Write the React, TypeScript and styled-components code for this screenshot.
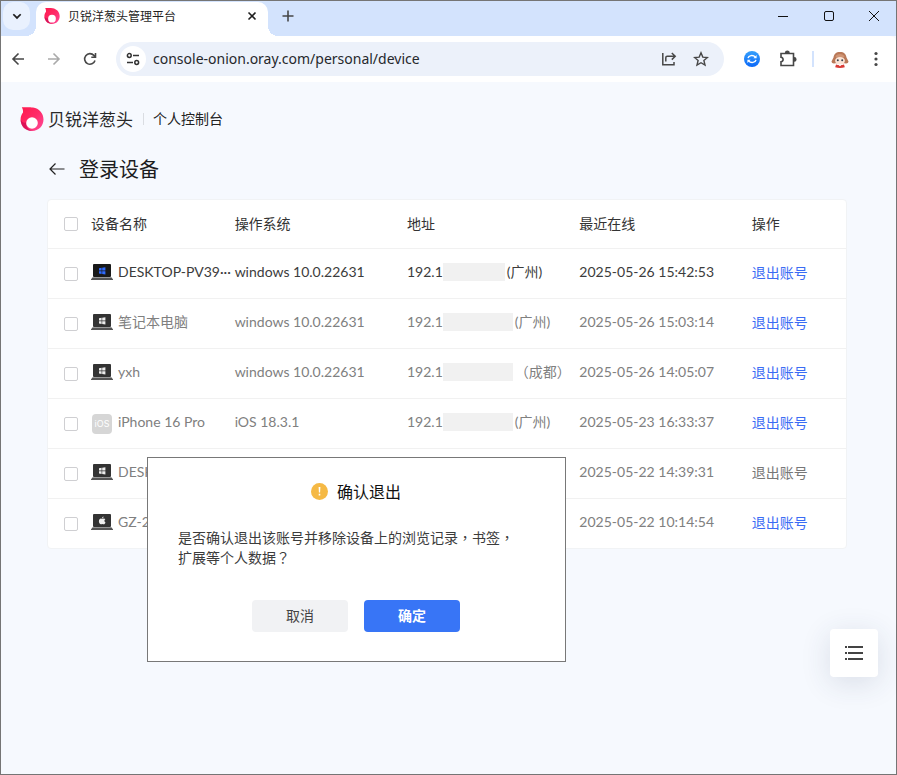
import React from "react";
import styled, { createGlobalStyle } from "styled-components";

const LATIN = '"Lato", "Noto Sans CJK SC", sans-serif';
const CJK = '"Noto Sans CJK SC", sans-serif';

const GlobalStyle = createGlobalStyle`
  * { box-sizing: border-box; }
  body { margin: 0; background: #f6f9fe; font-family: ${CJK}; }
  button, input { font: inherit; color: inherit; }
  button { border: 0; padding: 0; background: none; cursor: pointer; }
  svg { display: block; }
`;

const Frame = styled.div`
  position: relative;
  display: flex;
  flex-direction: column;
  min-height: 100vh;
  border: 1px solid #757575;
  background: #f6f9fe;
`;

const TabStrip = styled.header`
  display: flex;
  height: 35px;
  background: #d3e3fd;
`;

const TabSearch = styled.button`
  display: grid;
  place-items: center;
  width: 27px;
  height: 28px;
  margin: 1px 0 0 2px;
  border-radius: 10px;
  background: #e9f1fe;
  color: #1f1f1f;
`;

const Tab = styled.div`
  position: relative;
  display: flex;
  align-items: center;
  width: 232px;
  height: 34px;
  margin: 1px 0 0 6px;
  padding: 0 8px 6px 8px;
  border-radius: 10px 10px 0 0;
  background: #fff;
  &::before, &::after {
    content: "";
    position: absolute;
    bottom: 0;
    width: 10px;
    height: 10px;
  }
  &::before {
    right: 100%;
    background: radial-gradient(circle at 0 0, transparent 10px, #fff 10px);
  }
  &::after {
    left: 100%;
    background: radial-gradient(circle at 100% 0, transparent 10px, #fff 10px);
  }
`;

const TabTitle = styled.span`
  flex: 1;
  margin-left: 8px;
  font-size: 12px;
  line-height: 18px;
  color: #1f1f1f;
`;

const IconButton = styled.button<{ $size?: number; $color?: string }>`
  display: grid;
  place-items: center;
  width: ${(p) => p.$size ?? 28}px;
  height: ${(p) => p.$size ?? 28}px;
  color: ${(p) => p.$color ?? "#474747"};
`;

const NewTab = styled(IconButton)`
  margin: 1px 0 0 6px;
`;

const WindowControls = styled.div`
  display: flex;
  align-items: center;
  height: 30px;
  margin-left: auto;
`;

const WindowButton = styled.button`
  display: grid;
  place-items: center;
  width: 46px;
  height: 30px;
  color: #111;
  &:last-child { width: 44px; }
`;

const Toolbar = styled.div`
  display: flex;
  align-items: center;
  gap: 8px;
  height: 46px;
  padding: 0 6px 0 3px;
  border-radius: 0 6px 0 0;
  background: #fff;
`;

const AddressBar = styled.form`
  flex: 1;
  display: flex;
  align-items: center;
  gap: 4px;
  height: 34px;
  margin-left: 4px;
  padding: 0 9px 0 4px;
  border-radius: 17px;
  background: #ecf1fa;
`;

const SiteInfo = styled.button`
  display: grid;
  place-items: center;
  width: 26px;
  height: 26px;
  border-radius: 50%;
  background: #fff;
  color: #333;
`;

const UrlInput = styled.input`
  flex: 1;
  min-width: 0;
  height: 28px;
  padding: 0 3px 2px;
  border: 0;
  outline: 0;
  background: none;
  font-family: "Noto Sans", sans-serif;
  font-size: 14px;
  color: #26282c;
`;

const Extensions = styled.div`
  display: flex;
  align-items: center;
  gap: 9px;
  margin: 0 4px 0 6px;
`;

const Separator = styled.span<{ $height: number; $color: string; $width: number }>`
  width: ${(p) => p.$width}px;
  height: ${(p) => p.$height}px;
  background: ${(p) => p.$color};
`;

const Brand = styled.div`
  display: flex;
  align-items: center;
  height: 30px;
  margin: 22px 0 0 19px;
`;

const BrandName = styled.span`
  margin: 0 10px 0 4px;
  padding-bottom: 1px;
  font-size: 17px;
  line-height: 24px;
  color: #2a2a2a;
`;

const BrandSection = styled.span`
  margin-left: 9px;
  padding-bottom: 2px;
  font-size: 14px;
  line-height: 20px;
  color: #222;
`;

const PageHead = styled.div`
  display: flex;
  align-items: center;
  gap: 10px;
  height: 30px;
  margin: 20px 0 15px 44px;
`;

const PageTitle = styled.h1`
  margin: 0;
  font-size: 20px;
  font-weight: 400;
  line-height: 30px;
  color: #1d1d1f;
`;

const Panel = styled.section`
  margin: 0 49px 0 46px;
  border: 1px solid #f1f3f5;
  border-radius: 4px;
  background: #fff;
  overflow: hidden;
`;

const DeviceTable = styled.table`
  width: 100%;
  border-collapse: collapse;
  table-layout: fixed;
  font-family: ${LATIN};
  font-size: 14px;
  line-height: 20px;
`;

const Col = styled.col<{ $width: string }>`
  width: ${(p) => p.$width};
`;

const HeadCell = styled.th`
  height: 48px;
  padding: 0 0 2px;
  border-bottom: 1px solid #f1f1f1;
  text-align: left;
  font-family: ${CJK};
  font-weight: 400;
  color: #333;
`;

const Row = styled.tr<{ $current?: boolean }>`
  color: ${(p) => (p.$current ? "#3c3c3c" : "#808080")};
  &:not(:last-child) > td { border-bottom: 1px solid #f1f1f1; }
`;

const Cell = styled.td`
  height: 50px;
  padding: 0 0 2px;
  white-space: nowrap;
`;

const CheckHead = styled(HeadCell)`
  padding: 0 0 0 16px;
`;

const CheckCell = styled(Cell)`
  padding: 2px 0 0 16px;
`;

const Check = styled.input.attrs({ type: "checkbox" })`
  appearance: none;
  display: block;
  width: 14px;
  height: 14px;
  margin: 0;
  border: 1px solid #cfcfd2;
  border-radius: 2px;
  background: #fff;
  &:checked { background: #3875f6; border-color: #3875f6; }
`;

const Device = styled.div`
  display: flex;
  align-items: center;
  gap: 5px;
  height: 22px;
`;

const Address = styled.div`
  display: flex;
  align-items: center;
`;

const Mask = styled.span<{ $width: number }>`
  width: ${(p) => p.$width}px;
  height: 18px;
  margin-right: 2px;
  background: #f1f1f1;
`;

const LogoutButton = styled.button<{ $muted?: boolean }>`
  display: block;
  height: 20px;
  font-family: ${CJK};
  line-height: 20px;
  color: ${(p) => (p.$muted ? "#777" : "#3a6cf4")};
`;

const Dialog = styled.div`
  position: absolute;
  top: 456px;
  left: 146px;
  width: 419px;
  padding: 23px 40px 29px 30px;
  border: 1px solid #787878;
  background: #fff;
`;

const DialogTitle = styled.h2`
  display: flex;
  align-items: center;
  justify-content: center;
  gap: 9px;
  margin: 0 0 26px;
  padding-left: 9px;
  font-size: 16px;
  font-weight: 400;
  line-height: 20px;
  color: #111;
`;

const DialogText = styled.p`
  margin: 0;
  font-size: 14px;
  line-height: 20px;
  color: #3c3c3c;
`;

const Punctuation = styled.span`
  font-family: "Noto Sans CJK TC", sans-serif;
`;

const DialogActions = styled.div`
  display: flex;
  justify-content: center;
  gap: 16px;
  margin-top: 33px;
  padding-left: 9px;
`;

const DialogButton = styled.button<{ $primary?: boolean }>`
  width: 96px;
  height: 32px;
  padding-bottom: 2px;
  border-radius: 4px;
  background: ${(p) => (p.$primary ? "#3875f6" : "#f1f2f4")};
  color: ${(p) => (p.$primary ? "#fff" : "#444")};
  font-size: 14px;
  font-weight: ${(p) => (p.$primary ? 700 : 400)};
`;

const FloatingMenu = styled.button`
  position: fixed;
  right: 19px;
  bottom: 98px;
  display: grid;
  place-items: center;
  width: 48px;
  height: 48px;
  border-radius: 4px;
  background: #fff;
  box-shadow: 0 6px 30px rgba(40, 60, 90, 0.14);
`;

function OnionLogo({ width }: { width: number }) {
  return (
    <svg width={width} height={width} viewBox="0 0 24 24" aria-hidden="true">
      <defs>
        <linearGradient id="onion" x1="0" y1="0" x2="1" y2="1">
          <stop offset="0" stopColor="#ff1a4c" />
          <stop offset="0.5" stopColor="#ff2a68" />
          <stop offset="1" stopColor="#ff4d9c" />
        </linearGradient>
      </defs>
      <path fill="url(#onion)" d="M1.800.3C4 .1 10 0 13 .4 19 1.200 23.500 6 23.500 12.500 23.500 19 18.500 24 12 24 5.500 24 .6 19 .6 12.500.6 9.500 1.500 7.500 3 5.500 3.200 3.500 2.800 1.800 1.800.3Z" />
      <path fill="#c3054e" opacity=".6" d="M.6 12.500C.6 19 5 24 12 24c-4-1.500-6.500-5-6-8.500C3.500 16 1.500 15 .6 12.500Z" />
      <circle cx="12" cy="16" r="5.800" fill="#fff" />
    </svg>
  );
}

type LaptopKind = "active" | "windows" | "apple";

function LaptopIcon({ kind }: { kind: LaptopKind }) {
  const glyph = kind === "active" ? "#2f6bff" : "#eee";
  return (
    <svg width="22" height="18" viewBox="0 0 22 18" aria-hidden="true">
      <rect x="2" y="1" width="18" height="13" rx="1" fill={kind === "active" ? "#191919" : "#333"} />
      <path d="M2 14h18l2 2.200V17H0v-.8z" fill="#555" />
      <path d="M2 14h18v.8H2z" fill="#aaa" />
      {kind === "apple" ? (
        <path fill="#eee" d="M12.600 3.500c.1 1-.7 1.800-1.500 1.800-.1-.9.700-1.700 1.500-1.800ZM11.200 5.800c.6 0 1-.4 1.700-.4.600 0 1.100.3 1.400.8-1.300.8-1.100 2.600.2 3.200-.4 1-1 1.900-1.700 1.900-.6 0-.8-.3-1.500-.3s-.9.300-1.400.3C8.800 11.300 7.800 9.500 7.900 8c.1-1.600 1-2.500 2.100-2.500.500 0 .8.300 1.200.3Z" />
      ) : (
        <path fill={glyph} d="M8 5.200l2.600-.4v2.800H8zM11.200 4.700l3.200-.5v3.400h-3.200zM8 8.200h2.600V11L8 10.600zM11.200 8.200h3.200v3.400l-3.200-.5z" />
      )}
    </svg>
  );
}

const PhoneBadge = styled.span`
  display: grid;
  place-items: center;
  width: 20px;
  height: 20px;
  margin: 4px 1px 0;
  border-radius: 4px;
  background: #d6d6d6;
  color: #fff;
  font-family: "Inter", sans-serif;
  font-size: 9px;
  line-height: 20px;
`;

function Stroke({ d, size = 16, width = 2 }: { d: string; size?: number; width?: number }) {
  return (
    <svg width={size} height={size} viewBox="0 0 16 16" fill="none" stroke="currentColor" strokeWidth={width} aria-hidden="true">
      <path d={d} />
    </svg>
  );
}

function SyncIcon() {
  return (
    <svg width="16" height="16" viewBox="0 0 16 16" fill="none" aria-hidden="true">
      <defs>
        <linearGradient id="sync" x1="0" y1="0" x2="0" y2="1">
          <stop offset="0" stopColor="#36a0fb" />
          <stop offset="1" stopColor="#0b68f8" />
        </linearGradient>
      </defs>
      <circle cx="8" cy="8" r="8" fill="url(#sync)" />
      <path d="M4 7.200C4.600 4.300 9 3.600 11.300 6M12 8.800c-.6 2.900-5 3.600-7.300 1.200" stroke="#fff" strokeWidth="1.400" />
      <path d="M12.600 4v3.200H9.400zM3.400 12V8.800h3.200z" fill="#fff" />
    </svg>
  );
}

function AvatarIcon() {
  return (
    <svg width="18" height="18" viewBox="0 0 18 18" aria-hidden="true">
      <path fill="#b97857" d="M9 2C5 2 3 4 2.500 7.500L.5 11.500c.2 1.700 1.900 2.200 3.500 1.700h10c1.600.5 3.300 0 3.500-1.700l-2-4C15 4 13 2 9 2Z" />
      <path fill="#cf9474" d="M4.500 6C6.500 3.300 11.500 3.300 13.500 6L13 7.500H5z" />
      <ellipse cx="9" cy="10.800" rx="4.900" ry="3.800" fill="#fbe4d6" />
      <circle cx="6.800" cy="10.200" r="1" fill="#34404e" />
      <circle cx="11.200" cy="10.200" r="1" fill="#34404e" />
      <path fill="#d93a35" d="M5 14.600c2 .7 6 .7 8 0l.8 2.700c-3 .9-6.600.9-9.600 0z" />
      <path fill="#fff" d="M7.500 14.800 9 16.200l1.500-1.400z" />
    </svg>
  );
}

interface DeviceRow {
  name: string;
  icon: LaptopKind | "ios";
  os?: string;
  mask?: number;
  city?: string;
  time: string;
  current?: boolean;
  muted?: boolean;
}

const devices: DeviceRow[] = [
  { name: "DESKTOP-PV39···", icon: "active", os: "windows 10.0.22631", mask: 62, city: "(广州)", time: "2025-05-26 15:42:53", current: true },
  { name: "笔记本电脑", icon: "windows", os: "windows 10.0.22631", mask: 70, city: "(广州)", time: "2025-05-26 15:03:14" },
  { name: "yxh", icon: "windows", os: "windows 10.0.22631", mask: 70, city: "（成都）", time: "2025-05-26 14:05:07" },
  { name: "iPhone 16 Pro", icon: "ios", os: "iOS 18.3.1", mask: 70, city: "(广州)", time: "2025-05-23 16:33:37" },
  { name: "DESK", icon: "windows", time: "2025-05-22 14:39:31", muted: true },
  { name: "GZ-2", icon: "apple", time: "2025-05-22 10:14:54" },
];

export default function App() {
  return (
    <>
      <GlobalStyle />
      <Frame>
        <TabStrip>
          <TabSearch aria-label="搜索标签页">
            <Stroke d="M3.800 6 8 10.200 12.200 6" size={14} />
          </TabSearch>
          <Tab>
            <OnionLogo width={16} />
            <TabTitle>贝锐洋葱头管理平台</TabTitle>
            <IconButton $size={16} $color="#1f1f1f" aria-label="关闭标签页">
              <Stroke d="M4.500 4.500l7 7M11.500 4.500l-7 7" width={1.6} />
            </IconButton>
          </Tab>
          <NewTab aria-label="新标签页">
            <Stroke d="M8 2.500v11M2.500 8h11" width={1.6} />
          </NewTab>
          <WindowControls>
            <WindowButton aria-label="最小化"><Stroke d="M3 8.500h10" width={1} /></WindowButton>
            <WindowButton aria-label="最大化">
              <svg width="16" height="16" viewBox="0 0 16 16" fill="none" stroke="currentColor" aria-hidden="true">
                <rect x="3.500" y="3.500" width="9" height="9" rx="1.500" />
              </svg>
            </WindowButton>
            <WindowButton aria-label="关闭"><Stroke d="M3 3l10 10M13 3L3 13" width={1} /></WindowButton>
          </WindowControls>
        </TabStrip>

        <Toolbar>
          <IconButton aria-label="后退"><Stroke d="M14 8H3M8.500 2.500 3 8l5.500 5.500" width={1.6} /></IconButton>
          <IconButton $color="#aaa" aria-label="前进"><Stroke d="M2 8h11M7.500 2.500 13 8l-5.500 5.500" width={1.6} /></IconButton>
          <IconButton aria-label="刷新"><Stroke d="M13 9.500A5.300 5.300 0 1 1 11.900 4.400L13.500 6M13.500 2v4.200H9.300" width={1.6} /></IconButton>
          <AddressBar onSubmit={(e) => e.preventDefault()}>
            <SiteInfo type="button" aria-label="查看网站信息">
              <svg width="16" height="16" viewBox="0 0 16 16" fill="none" stroke="currentColor" strokeWidth="1.500" aria-hidden="true">
                <circle cx="4.300" cy="4.500" r="1.900" />
                <path d="M8 4.500h6M2 11.500h6" />
                <circle cx="11.700" cy="11.500" r="1.900" />
              </svg>
            </SiteInfo>
            <UrlInput aria-label="地址栏" defaultValue="console-onion.oray.com/personal/device" />
            <IconButton type="button" aria-label="分享">
              <Stroke d="M1.800 2v11.700H13V11M4.800 10.500V6.800c0-1 .4-1.500 1.400-1.500H14M10.800 2 14.200 5.300l-3.400 3.300" width={1.5} />
            </IconButton>
            <IconButton type="button" aria-label="收藏">
              <Stroke d="M8 1.800l1.800 4.300 4.600.4-3.500 3 1.100 4.600L8 11.700l-4 2.400 1.100-4.600-3.500-3 4.600-.4z" width={1.4} />
            </IconButton>
          </AddressBar>
          <Extensions>
            <IconButton aria-label="同步"><SyncIcon /></IconButton>
            <IconButton aria-label="扩展程序">
              <svg width="20" height="20" viewBox="0 0 20 20" fill="none" stroke="currentColor" strokeWidth="1.600" aria-hidden="true">
                <path d="M2 4.500h12.500v12H2v-3.700c2.800-.4 2.800-4.200 0-4.600z" />
                <path d="M6.700 3.800a1.600 1.600 0 0 1 3.200 0zM15.200 8.800a1.600 1.600 0 0 1 0 3.200z" fill="currentColor" />
              </svg>
            </IconButton>
            <Separator $width={2} $height={16} $color="#d3e3fd" />
          </Extensions>
          <IconButton aria-label="个人资料"><AvatarIcon /></IconButton>
          <IconButton aria-label="更多">
            <svg width="16" height="16" viewBox="0 0 16 16" fill="currentColor" aria-hidden="true">
              <circle cx="8" cy="2.500" r="1.600" /><circle cx="8" cy="8" r="1.600" /><circle cx="8" cy="13.500" r="1.600" />
            </svg>
          </IconButton>
        </Toolbar>

        <main>
          <Brand>
            <OnionLogo width={24} />
            <BrandName>贝锐洋葱头</BrandName>
            <Separator $width={1} $height={12} $color="#dadde2" />
            <BrandSection>个人控制台</BrandSection>
          </Brand>
          <PageHead>
            <IconButton $size={24} $color="#222" aria-label="返回">
              <Stroke d="M15.500 8H1M6.500 2.500 1 8l5.500 5.500" width={1.2} />
            </IconButton>
            <PageTitle>登录设备</PageTitle>
          </PageHead>
          <Panel>
            <DeviceTable>
              <colgroup>
                <Col $width="43px" />
                <Col $width="18%" />
                <Col $width="21.600%" />
                <Col $width="21.600%" />
                <Col $width="21.600%" />
                <col />
              </colgroup>
              <thead>
                <tr>
                  <CheckHead><Check aria-label="全选" /></CheckHead>
                  <HeadCell>设备名称</HeadCell>
                  <HeadCell>操作系统</HeadCell>
                  <HeadCell>地址</HeadCell>
                  <HeadCell>最近在线</HeadCell>
                  <HeadCell>操作</HeadCell>
                </tr>
              </thead>
              <tbody>
                {devices.map((d) => (
                  <Row key={d.time} $current={d.current}>
                    <CheckCell><Check aria-label={d.name} /></CheckCell>
                    <Cell>
                      <Device>
                        {d.icon === "ios" ? <PhoneBadge>iOS</PhoneBadge> : <LaptopIcon kind={d.icon} />}
                        <span>{d.name}</span>
                      </Device>
                    </Cell>
                    <Cell>{d.os}</Cell>
                    <Cell>
                      {d.city && (
                        <Address>192.1<Mask $width={d.mask ?? 70} />{d.city}</Address>
                      )}
                    </Cell>
                    <Cell>{d.time}</Cell>
                    <Cell><LogoutButton $muted={d.muted}>退出账号</LogoutButton></Cell>
                  </Row>
                ))}
              </tbody>
            </DeviceTable>
          </Panel>
        </main>

        <Dialog role="dialog" aria-labelledby="confirm-title">
          <DialogTitle id="confirm-title">
            <svg width="17" height="17" viewBox="0 0 17 17" aria-hidden="true">
              <circle cx="8.500" cy="8.500" r="8.500" fill="#f5b945" />
              <path d="M7.600 4h1.800l-.3 5.500H7.900zM7.700 10.700h1.600v1.700H7.700z" fill="#fff" />
            </svg>
            确认退出
          </DialogTitle>
          <DialogText>
            是否确认退出该账号并移除设备上的浏览记录<Punctuation>，</Punctuation>书签<Punctuation>，</Punctuation>
            <br />
            扩展等个人数据<Punctuation>？</Punctuation>
          </DialogText>
          <DialogActions>
            <DialogButton>取消</DialogButton>
            <DialogButton $primary>确定</DialogButton>
          </DialogActions>
        </Dialog>

        <FloatingMenu aria-label="菜单">
          <svg width="20" height="16" viewBox="0 0 20 16" fill="#444" aria-hidden="true">
            <path d="M1 1h2v2H1zM4 1h15v2H4zM1 7h2v2H1zM4 7h15v2H4zM1 13h2v2H1zM4 13h15v2H4z" />
          </svg>
        </FloatingMenu>
      </Frame>
    </>
  );
}
